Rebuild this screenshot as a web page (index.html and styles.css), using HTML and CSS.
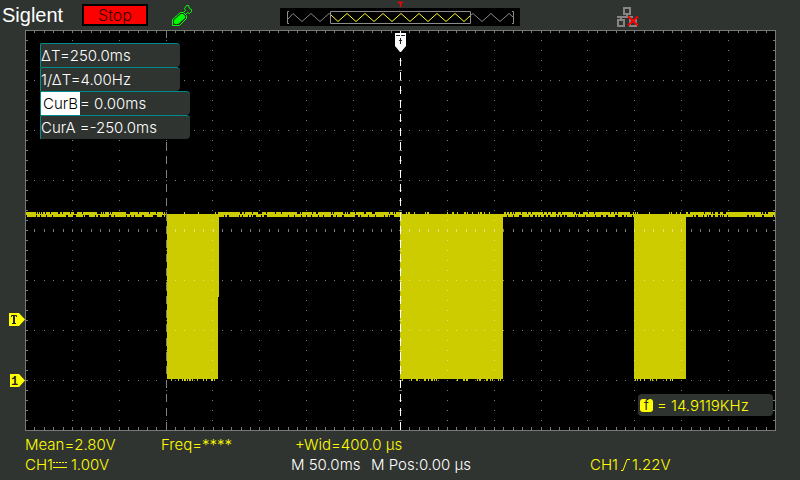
FILE: index.html
```html
<!DOCTYPE html>
<html lang="en">
<head>
<meta charset="utf-8">
<title>Siglent oscilloscope</title>
<link rel="stylesheet" href="styles.css">
</head>
<body>
<header class="topbar">
  <span class="brand">Siglent</span>
  <button class="run-state" type="button">Stop</button>
  <svg class="usb-icon" width="22" height="22" viewBox="0 0 22 22" aria-hidden="true">
    <path d="M1.500 20.500V14.500L9.500 7.500H12.500L15.500 10.500V13.500L8.500 20.500Z" fill="none" stroke="#00ff00"/>
    <path d="M3 18V15L10 9H12L14 11V13L7 19H4Z" fill="#00ff00"/>
    <path d="M12.500 7.500L14.500 5.500L13.500 3.500L15.500 .5H17.500L18.500 3.500L20.500 4.500V6.500L18.500 8.500L16.500 7.500L14.500 9.500" fill="none" stroke="#00ff00"/>
  </svg>
  <svg class="memory" width="240" height="29" viewBox="280 0 240 29" aria-hidden="true">
    <rect x="280" y="8" width="240" height="18" fill="#000"/>
    <g fill="none">
      <path d="M288 19L293 13.500L302 21.500L311 13.500L320 21.500L329 13.500L331 15M471 15L473 13.500L482 21.500L491 13.500L500 21.500L509 13.500L513 17" stroke="#858585"/>
      <path d="M331 15L338 21.500L347 13.500L356 21.500L365 13.500L374 21.500L383 13.500L392 21.500L401 13.500L410 21.500L419 13.500L428 21.500L437 13.500L446 21.500L455 13.500L464 21.500L471 15" stroke="#ffff20"/>
      <path d="M289 11.500H287.500V23.500H289M512 11.500H513.500V23.500H512M330.500 11.500H470.500V23.500H330.500Z" stroke="#8c8c8c"/>
    </g>
    <path d="M398 2H403V3H401V7H400V3H398Z" fill="#f00" stroke="#f00" stroke-width=".4"/>
  </svg>
  <svg class="lan-icon" width="22" height="21" viewBox="617 7 22 21" aria-hidden="true">
    <g fill="none" stroke="#858585" stroke-width="2">
      <path d="M624 8H630V14H624ZM618 20H624V26H618ZM630 20H636V26H630Z"/>
      <path d="M617 17H633M627 14V17M621 17V20"/>
    </g>
    <path d="M628 16.500L638 25.500M638 16.500L628 25.500" stroke="#f00" stroke-width="2"/>
  </svg>
</header>

<main class="stage">
  <svg class="scope" viewBox="0 29 800 403" role="img" aria-label="Channel 1 waveform">
    <rect x="25" y="30" width="751" height="401" fill="#000"/>
    <g shape-rendering="crispEdges">
      <path id="trace" fill="#cccc00"/>
      <path id="grid" fill="#fff" fill-opacity=".48"/>
      <path d="M166.500 30V430" stroke="#808080" stroke-dasharray="8 6"/>
      <path d="M400.500 30V430" stroke="#fff" stroke-dasharray="8 6"/>
    </g>
    <rect x="25.500" y="30.500" width="750" height="400" fill="none" stroke="#777975"/>
    <path d="M395 33H406V46L401 52H400L395 46Z" fill="#fff"/>
    <path d="M396 35.500H400M401 35.500H405M400.500 38V44M399 40.500H402" stroke="#222" fill="none"/>
    <g fill="#ffff00">
      <path d="M9 313H19L25 319.500L19 326H9Z"/>
      <path d="M10 374H19L25 380.500L19 387H10Z"/>
    </g>
    <path d="M11.500 317V315.500H16.500V317M12 323.500H16" fill="none" stroke="#222"/>
    <path d="M14 315V324" stroke="#222" stroke-width="2"/>
    <text class="marker" x="11" y="385">1</text>
  </svg>

  <div class="cursors">
    <div class="readout">ΔT=250.0ms</div>
    <div class="readout">1/ΔT=4.00Hz</div>
    <div class="readout wide"><span class="selected">CurB</span>= 0.00ms</div>
    <div class="readout wide">CurA =-250.0ms</div>
  </div>

  <div class="counter"><span class="counter-tag">f</span>= 14.9119KHz</div>
</main>

<footer class="status">
  <div class="row">
    <span class="c1">Mean=2.80V</span>
    <span class="c2">Freq=****</span>
    <span class="c3">+Wid=400.0 µs</span>
  </div>
  <div class="row">
    <span class="c1 channel">CH1<svg width="14" height="8" viewBox="0 0 14 8" aria-hidden="true"><path d="M0 1.500H14" stroke="#ff0" stroke-dasharray="2 1"/><path d="M0 6.500H14" stroke="#ff0"/></svg><span class="scale">1.00V</span></span>
    <span class="time">M 50.0ms</span>
    <span class="pos">M Pos:0.00 µs</span>
    <span class="trigger">CH1<svg width="10" height="12" viewBox="0 0 10 12" aria-hidden="true"><path d="M1 11.500H3L7 .5H10" fill="none" stroke="#ff0"/></svg>1.22V</span>
  </div>
</footer>
<script src="scope.js"></script>
</body>
</html>
```
FILE: styles.css
```css
* { box-sizing: border-box; }

body {
  margin: 0;
  min-height: 100vh;
  background: #303431;
  color: #fff;
  font: 300 15px/20px Inter, "Liberation Sans", Arial, sans-serif;
}

.topbar {
  display: grid;
  grid-template-columns: 80px 89px 109px 1fr 183px;
  align-items: start;
  height: 29px;
  padding-left: 2px;
}

.brand {
  font: 20px/30px "Liberation Sans", Arial, sans-serif;
}

.run-state {
  width: 66px;
  height: 22px;
  margin-top: 4px;
  padding: 0;
  border: 2px solid #000;
  background: #f00;
  color: #300;
  font: inherit;
  font-size: 16px;
  line-height: 18px;
}

.usb-icon { margin-top: 5px; }
.lan-icon { margin-top: 7px; }

.stage { position: relative; }

.scope {
  display: block;
  width: 100%;
  height: auto;
}

.marker {
  font: bold 12px "Liberation Mono", monospace;
  fill: #222;
}

.cursors {
  position: absolute;
  top: 14px;
  left: 40px;
}

.readout {
  width: 140px;
  height: 24px;
  border-top: 1px solid #008c8c;
  border-left: 1px solid #008c8c;
  border-radius: 2px 4px 4px 0;
  background: #303431;
  line-height: 24px;
  white-space: pre;
}

.readout.wide { width: 150px; }

.selected {
  display: inline-block;
  height: 23px;
  padding: 0 2px;
  background: #fff;
  color: #000;
}

.counter {
  position: absolute;
  right: 27px;
  bottom: 16px;
  display: flex;
  align-items: center;
  gap: 4px;
  width: 135px;
  height: 22px;
  padding: 1px 0 0 2px;
  border-radius: 4px;
  background: #303431;
  color: #ff0;
  white-space: nowrap;
}

.counter-tag {
  width: 13px;
  height: 13px;
  border-radius: 3px;
  background: #ff0;
  color: #222;
  font-size: 13px;
  font-weight: 400;
  line-height: 13px;
  text-align: center;
}

.status {
  padding: 3px 0 0 25px;
  color: #ff0;
}

.row {
  display: grid;
  grid-template-columns: 136px 130px 80px 219px 1fr;
  white-space: nowrap;
}

.c3 { grid-column: 3 / 5; padding-left: 4px; }
.channel, .trigger { display: flex; align-items: center; }
.scale { padding-left: 4px; }
.time { grid-column: 3; color: #fff; }
.pos { color: #fff; }
.trigger { gap: 2px; }
```
FILE: scope.js
```js
const box = (x, y, w, h) => `M${x} ${y}h${w}v${h}h${-w}z`;
const column = i => Math.round(25 + i * 9.375);

// Graticule: dotted divisions, centre axis ticks and edge ticks.
let grid = "";
for (let d = 1; d < 16; d++) {
  const x = Math.floor(25.4 + d * 46.875);
  for (let y = 40; y < 430; y += 10) {
    grid += d === 8 ? box(x - 1, y, 3, 1) : box(x, y, 1, 1);
  }
}
for (let i = 1; i < 80; i++) {
  const x = column(i);
  grid += box(x, 31, 1, 2) + box(x, 427, 1, 3) + box(x, 229, 1, 3);
  if (i % 5) for (let y = 80; y < 430; y += 50) if (y !== 230) grid += box(x, y, 1, 1);
}
for (let y = 40; y < 430; y += 10) grid += box(26, y, 2, 1) + box(773, y, 2, 1);
document.getElementById("grid").setAttribute("d", grid);

// Channel 1: high level with sampling noise, and three pulse bursts.
let seed = 7;
const random = () => (seed = (seed * 16807) % 2147483647) / 2147483647;
const bursts = [[167, 218], [400, 503], [634, 686]];
let trace = box(26, 214, 749, 1) + box(218, 214, 1, 83);
for (const [a, b] of bursts) trace += box(a, 214, b - a, 165);
let above = true;
let below = true;
for (let x = 26; x < 775; x++) {
  const inBurst = bursts.some(([a, b]) => x >= a && x < b);
  if (inBurst) {
    if (random() < 0.12) trace += box(x, 212, 1, 2);
    if (random() < 0.22) trace += box(x, 379, 1, 2);
  } else {
    above = random() < (above ? 0.82 : 0.75);
    below = random() < (below ? 0.8 : 0.7);
    if (above) trace += box(x, 212, 1, 2);
    if (below) trace += box(x, 215, 1, 2);
  }
}
document.getElementById("trace").setAttribute("d", trace);
```
